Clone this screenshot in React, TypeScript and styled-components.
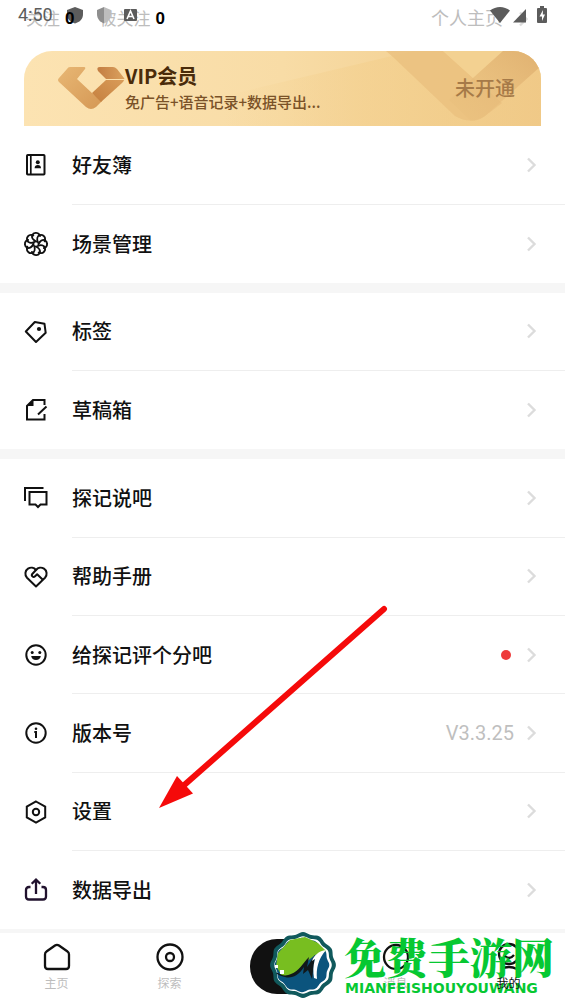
import React from "react";
import styled, { createGlobalStyle } from "styled-components";

const GlobalStyle = createGlobalStyle`
  * { box-sizing: border-box; }
  body {
    margin: 0;
    background: #fff;
    color: #111;
    font-family: Roboto, "Noto Sans CJK SC", sans-serif;
  }
  a { color: inherit; text-decoration: none; }
  button { font: inherit; border: 0; padding: 0; cursor: pointer; }
`;

const Page = styled.div`
  position: relative;
  display: flex;
  flex-direction: column;
  min-height: 100vh;
  overflow: hidden;
`;

const Profile = styled.header`
  display: flex;
  align-items: center;
  height: 51px;
  padding: 0 36px 14px 26px;
  font-size: 18px;
  line-height: 24px;
  color: #bdbdbd;
`;

const Stat = styled.a`
  display: flex;
  align-items: center;
  gap: 5px;
  margin-right: 25px;
  font-size: 17px;
`;

const Count = styled.strong`
  position: relative;
  z-index: 1;
  font-family: "Liberation Sans", sans-serif;
  font-size: 17px;
  color: #000;
`;

const ProfileLink = styled.a`
  display: flex;
  align-items: center;
  gap: 16px;
  margin-left: auto;
`;

const StatusBar = styled.div`
  position: absolute;
  top: 0;
  left: 0;
  right: 0;
  display: flex;
  align-items: center;
  height: 30px;
  padding: 0 18px;
  color: #5c5c5c;
`;

const Clock = styled.time`
  width: 48px;
  font-size: 18px;
  line-height: 30px;
`;

const StatusIcons = styled.div<{ $end?: boolean }>`
  display: flex;
  align-items: center;
  gap: ${(p) => (p.$end ? 3 : 12)}px;
  margin-left: ${(p) => (p.$end ? "auto" : 0)};
`;

const VipCard = styled.a`
  position: relative;
  display: flex;
  align-items: center;
  height: 75px;
  margin: 0 24px;
  padding: 0 26px 2px 34px;
  border-radius: 28px 28px 0 0;
  overflow: hidden;
  font-family: "Noto Sans CJK SC", sans-serif;
  background: linear-gradient(90deg, #fce3b2, #f8dca6 50%, #f0ca88);
`;

const VipPattern = styled.svg`
  position: absolute;
  top: 0;
  right: 0;
`;

const VipLogo = styled.svg`
  position: relative;
  flex: none;
`;

const VipText = styled.div`
  position: relative;
  flex: 1;
  color: #4a2b0a;
`;

const VipTitle = styled.div`
  font-size: 20px;
  line-height: 28px;
  font-weight: 700;
`;

const VipNote = styled.div`
  font-size: 15px;
  line-height: 24px;
  font-weight: 500;
  color: #7a5228;
`;

const VipState = styled.span`
  position: relative;
  font-size: 20px;
  font-weight: 500;
  color: #a67a48;
`;

const Group = styled.ul<{ $rows: number; $gap: number }>`
  display: flex;
  flex-direction: column;
  flex: ${(p) => p.$rows} 0 auto;
  margin: 0;
  padding: 0;
  list-style: none;
  border-bottom: ${(p) => p.$gap}px solid #f6f6f6;
`;

const Item = styled.li`
  display: flex;
  flex: 1 0 auto;
  min-height: 78px;
`;

const RowLink = styled.a`
  display: flex;
  flex: 1;
  gap: 24px;
  padding-left: 24px;
`;

const RowIcon = styled.svg`
  flex: none;
  align-self: center;
  overflow: visible;
`;

const RowBody = styled.div`
  display: flex;
  flex: 1;
  align-items: center;
  gap: 13px;
  padding-right: 28px;
  ${Item}:not(:last-child) & {
    border-bottom: 1px solid #eeeeee;
  }
`;

const Label = styled.span`
  flex: 1;
  padding-top: 2px;
  font-size: 20px;
  line-height: 28px;
  font-weight: 500;
`;

const Value = styled.span`
  font-size: 20px;
  color: #bfbfbf;
`;

const Dot = styled.span`
  width: 10px;
  height: 10px;
  margin-right: 3px;
  border-radius: 50%;
  background: #ee3b3b;
`;

const TabBar = styled.nav`
  display: grid;
  grid-template-columns: repeat(5, 1fr);
  height: 71px;
`;

const Tab = styled.a`
  display: flex;
  flex-direction: column;
  align-items: center;
  padding-top: 8px;
  gap: 2px;
  color: #111;
`;

const TabLabel = styled.span<{ $active?: boolean }>`
  position: relative;
  z-index: ${(p) => (p.$active ? 1 : 0)};
  font-size: 12px;
  line-height: 18px;
  color: ${(p) => (p.$active ? "#111" : "#bdbdbd")};
`;

const AddButton = styled.button`
  justify-self: center;
  width: 66px;
  height: 55px;
  margin-top: 6px;
  border-radius: 27px;
  background: #111;
  color: #fff;
`;

const Pointer = styled.svg`
  position: absolute;
  top: 600px;
  left: 150px;
  pointer-events: none;
`;

const Watermark = styled.div`
  position: absolute;
  right: 11px;
  bottom: 6px;
  display: flex;
  align-items: center;
  gap: 8px;
  color: #06c832;
  pointer-events: none;
`;

const SiteName = styled.div`
  font-family: "Noto Serif CJK SC", "Noto Sans CJK SC", serif;
  font-size: 42px;
  line-height: 46px;
  font-weight: 900;
`;

const SiteUrl = styled.div`
  padding-left: 1px;
  font-family: "DejaVu Sans", sans-serif;
  font-size: 14px;
  line-height: 18px;
  font-weight: 700;
`;

const Chevron = () => (
  <svg width="10" height="16" viewBox="0 0 10 16" fill="none" stroke="#dcdcdc" strokeWidth="2.4" aria-hidden="true">
    <path d="M1 1.500L7.500 8 1 14.500" />
  </svg>
);

const petals = [0, 45, 90, 135, 180, 225, 270, 315];

const icons: Record<string, React.ReactNode> = {
  book: (
    <>
      <rect x="3" y="2" width="17.500" height="19.500" rx="0.800" />
      <path d="M6.800 2v19.500" strokeWidth="1.700" />
      <circle cx="13.800" cy="9.300" r="2" fill="currentColor" stroke="none" />
      <path d="M10.600 15.200c0-2 1.300-3.100 3.200-3.100s3.200 1.100 3.200 3.100z" fill="currentColor" stroke="none" />
    </>
  ),
  flower: (
    <>
      {petals.map((a) => (
        <path
          key={a}
          transform={`rotate(${a} 12 12)`}
          d="M12 9.500C9 8 7.300 5.300 8.300 3.200C9.500 .4 13.500 .2 15.200 2.300C16 3.300 16.100 4 15.900 4.800"
          strokeWidth="1.900"
        />
      ))}
      <circle cx="12" cy="12" r="2.500" strokeWidth="1.300" />
    </>
  ),
  tag: (
    <>
      <path d="M1.800 11.500L10.800 2l9.700 1.800 1.200 9-9.700 9.200z" strokeLinejoin="round" />
      <circle cx="15" cy="9" r="2.100" fill="currentColor" stroke="none" />
    </>
  ),
  draft: (
    <>
      <path d="M20.500 7V2H9L3 8v13.500h17.500V16" />
      <path d="M9.500 2v6H3z" fill="currentColor" stroke="none" />
      <path d="M14 16.500l8.500-8" />
    </>
  ),
  chat: (
    <>
      <path d="M1 15V2h18.500" />
      <path d="M5.500 6h17v12.500h-6L14 21l-2.500-2.500h-6z" />
    </>
  ),
  help: (
    <>
      <path d="M12 21.500L3 12.800C.4 10 1.100 5.500 4 3.700 6.700 2 10 2.600 12 5c2-2.400 5.300-3 8-1.300 2.900 1.800 3.600 6.300 1 9.100z" strokeLinejoin="round" />
      <path d="M12 5L8.500 8.700c-1.800 2 .7 4.300 2.600 2.500l2-1.900 6 5.700" strokeLinejoin="round" />
    </>
  ),
  smile: (
    <>
      <circle cx="12" cy="12" r="9.700" />
      <circle cx="8.200" cy="9.500" r="1.500" fill="currentColor" stroke="none" />
      <circle cx="15.800" cy="9.500" r="1.500" fill="currentColor" stroke="none" />
      <path d="M7.200 13h9.600c-.4 2.700-2.200 4-4.800 4s-4.400-1.300-4.800-4z" fill="currentColor" stroke="none" />
    </>
  ),
  info: (
    <>
      <circle cx="12" cy="12" r="9.700" />
      <circle cx="12" cy="7.700" r="1.300" fill="currentColor" stroke="none" />
      <path d="M10.300 10.900H12V17" />
    </>
  ),
  settings: (
    <>
      <path d="M12 1.500l9.200 5.200v10.600L12 22.500l-9.200-5.200V6.700z" />
      <circle cx="12" cy="12" r="3.200" />
    </>
  ),
  share: (
    <g stroke="#21122e" strokeWidth="2.300">
      <path d="M6.500 9H5c-2 0-3 1-3 3v6.500c0 2 1 3 3 3h14c2 0 3-1 3-3V12c0-2-1-3-3-3h-1.500" />
      <path d="M12 16V2M7.700 5.800L12 1.600l4.300 4.200" />
    </g>
  ),
};

type Row = { icon: string; label: string; value?: string; dot?: boolean };

const groups: Row[][] = [
  [
    { icon: "book", label: "好友簿" },
    { icon: "flower", label: "场景管理" },
  ],
  [
    { icon: "tag", label: "标签" },
    { icon: "draft", label: "草稿箱" },
  ],
  [
    { icon: "chat", label: "探记说吧" },
    { icon: "help", label: "帮助手册" },
    { icon: "smile", label: "给探记评个分吧", dot: true },
    { icon: "info", label: "版本号", value: "V3.3.25" },
    { icon: "settings", label: "设置" },
    { icon: "share", label: "数据导出" },
  ],
];

const TabIcon = ({ children }: { children: React.ReactNode }) => (
  <svg width="32" height="32" viewBox="0 0 32 32" fill="none" stroke="currentColor" strokeWidth="2.300" aria-hidden="true">
    {children}
  </svg>
);

/* Scalloped outline of the site emblem */
const scallop = (cx: number, cy: number, r: number, depth: number) => {
  const pts: string[] = [];
  for (let i = 0; i < 120; i++) {
    const t = (i / 120) * Math.PI * 2;
    const d = r + depth * Math.cos(12 * t);
    pts.push(`${(cx + d * Math.cos(t)).toFixed(1)},${(cy + d * Math.sin(t)).toFixed(1)}`);
  }
  return pts.join(" ");
};

export default function App() {
  return (
    <Page>
      <GlobalStyle />
      <Profile>
        <Stat href="#following">关注 <Count>0</Count></Stat>
        <Stat href="#followers">被关注 <Count>0</Count></Stat>
        <ProfileLink href="#profile">
          个人主页
          <Chevron />
        </ProfileLink>
      </Profile>

      <StatusBar>
        <Clock>4:50</Clock>
        <StatusIcons>
          <svg width="18" height="18" viewBox="0 0 18 18" aria-hidden="true">
            <path d="M9 1l8 3v4c0 5-3 8-8 9.500C4 16 1 13 1 8V4z" fill="#5c5c5c" />
          </svg>
          <svg width="16" height="18" viewBox="0 0 16 18" aria-hidden="true">
            <path d="M8 1l7 3v4c0 5-3 8-7 9.500z" fill="#bdbdbd" />
            <path d="M8 1L1 4v4c0 5 3 8 7 9.500z" fill="#8e8e8e" />
          </svg>
          <svg width="13" height="18" viewBox="0 0 13 18" aria-hidden="true">
            <rect x="0" y="3" width="13" height="12" rx="1" fill="#5c5c5c" />
            <path d="M3 13l3.500-8L10 13M4.500 10.500h4" fill="none" stroke="#fff" strokeWidth="1.600" />
          </svg>
        </StatusIcons>
        <StatusIcons $end>
          <svg width="20" height="18" viewBox="0 0 20 18" aria-hidden="true">
            <path d="M0 4.500C6-.2 14-.2 20 4.500L10 17z" fill="currentColor" />
          </svg>
          <svg width="21" height="18" viewBox="0 0 21 18" aria-hidden="true">
            <path d="M0 16.500L13 3v13.500z" fill="currentColor" />
          </svg>
          <svg width="10" height="18" viewBox="0 0 10 18" aria-hidden="true">
            <path d="M3 0h4v2h2q1 0 1 1v13q0 1-1 1H1q-1 0-1-1V3q0-1 1-1h2z" fill="currentColor" />
            <path d="M6 4L2.500 10.500H5V15l3-6.500H5.800z" fill="#fff" />
          </svg>
        </StatusIcons>
      </StatusBar>

      <VipCard href="#vip">
        <VipPattern width="317" height="75" viewBox="200 0 317 75" aria-hidden="true">
          <defs>
            <linearGradient id="sweep" x1="0" x2="1">
              <stop offset="0" stopColor="#f3cf8c" stopOpacity="0" />
              <stop offset="0.500" stopColor="#f3cf8c" stopOpacity="0.600" />
              <stop offset="1" stopColor="#f0c987" stopOpacity="0.700" />
            </linearGradient>
            <linearGradient id="arm" x1="1" y1="0" x2="0" y2="1">
              <stop offset="0" stopColor="#e0b171" />
              <stop offset="1" stopColor="#e9c07d" stopOpacity="0.300" />
            </linearGradient>
          </defs>
          <path d="M200 45L389 0H517V75H200z" fill="url(#sweep)" />
          <path d="M362 0H419L449 27L478 52L461 65Q447 74 431 65L369 6z" fill="#e9bf7d" opacity="0.750" />
          <path d="M419 0H479L449 27z" fill="#f3d191" />
          <path d="M479 0H517V15L461 65Q455 70 447 70L425 49L449 27z" fill="url(#arm)" />
        </VipPattern>
        <VipLogo width="67" height="44" viewBox="0 0 67 44" aria-hidden="true">
          <defs>
            <linearGradient id="gold" x1="0" x2="1" y2="1">
              <stop offset="0" stopColor="#e8b774" />
              <stop offset="1" stopColor="#d59855" />
            </linearGradient>
            <linearGradient id="bronze" x1="0" x2="1">
              <stop offset="0" stopColor="#c37d42" />
              <stop offset="1" stopColor="#dba25f" />
            </linearGradient>
            <linearGradient id="shade" x1="0" y1="1" x2="1" y2="0">
              <stop offset="0" stopColor="#c5803f" />
              <stop offset="1" stopColor="#d99b58" />
            </linearGradient>
          </defs>
          <path d="M12 1H26Q28 1 27 3L19 13L34 27L44 35L38 41Q33 45 28 41L1 16Q-1 14 1 12L9 3Q10 1 12 1z" fill="url(#gold)" />
          <path d="M42 1h13q2 0 4 2l7 9q1 1 0 1H48L40 5q-2-4 2-4z" fill="url(#bronze)" />
          <path d="M48 14H66Q66 15 64 17L43 36L34 27z" fill="url(#shade)" />
        </VipLogo>
        <VipText>
          <VipTitle>VIP会员</VipTitle>
          <VipNote>免广告+语音记录+数据导出...</VipNote>
        </VipText>
        <VipState>未开通</VipState>
      </VipCard>

      {groups.map((rows, i) => (
        <Group key={i} $rows={rows.length} $gap={i === groups.length - 1 ? 4 : 10}>
          {rows.map((row) => (
            <Item key={row.icon}>
              <RowLink href={`#${row.icon}`}>
                <RowIcon
                  width="24"
                  height="24"
                  viewBox="0 0 24 24"
                  fill="none"
                  stroke="currentColor"
                  strokeWidth="2"
                  aria-hidden="true"
                >
                  {icons[row.icon]}
                </RowIcon>
                <RowBody>
                  <Label>{row.label}</Label>
                  {row.value && <Value>{row.value}</Value>}
                  {row.dot && <Dot />}
                  <Chevron />
                </RowBody>
              </RowLink>
            </Item>
          ))}
        </Group>
      ))}

      <TabBar>
        <Tab href="#home">
          <TabIcon>
            <path d="M14 4.500q2-1.400 4 0l8.500 6q1.500 1 1.500 3V25q0 3-3 3H7q-3 0-3-3V13.500q0-2 1.500-3z" />
          </TabIcon>
          <TabLabel>主页</TabLabel>
        </Tab>
        <Tab href="#explore">
          <TabIcon>
            <circle cx="16" cy="16" r="12.500" />
            <circle cx="16" cy="16" r="4" />
          </TabIcon>
          <TabLabel>探索</TabLabel>
        </Tab>
        <AddButton aria-label="新建">
          <svg width="20" height="20" viewBox="0 0 20 20" stroke="currentColor" strokeWidth="3" aria-hidden="true">
            <path d="M10 1v18M1 10h18" />
          </svg>
        </AddButton>
        <Tab href="#messages">
          <TabIcon>
            <circle cx="16" cy="16" r="12" />
          </TabIcon>
          <TabLabel>消息</TabLabel>
        </Tab>
        <Tab href="#me">
          <TabIcon>
            <circle cx="16" cy="13" r="10" />
            <path d="M11 14q5 6 10 0M8 28q8-4 16 0" />
          </TabIcon>
          <TabLabel $active>我的</TabLabel>
        </Tab>
      </TabBar>

      <Pointer width="250" height="220" viewBox="150 600 250 220" aria-hidden="true">
        <path d="M384 609L182 787" stroke="#f50a0a" strokeWidth="6" strokeLinecap="round" />
        <path d="M159 808L177 776L193 793.500z" fill="#f50a0a" />
      </Pointer>

      <Watermark>
        <svg width="66" height="66" viewBox="0 0 66 66" aria-hidden="true">
          <polygon points={scallop(33, 33, 32, 0.900)} fill="#10595c" />
          <polygon points={scallop(33, 33, 28, 0.800)} fill="#fff" />
          <polygon points={scallop(32, 33, 26.500, 0.800)} fill="#0b547d" />
          <path d="M6 34L8 21 20 8 35 5l13 6 8 8-11 4-10 8-12 13H12z" fill="#78be20" />
          <path d="M8 41c4 3 9 3 13 1 8-3 12-11 18-17l-2 10 8-12-3 24-4-9-5 4 1-7c-5 8-12 12-19 10-4-1-7-2-9-4z" fill="#11181a" />
          <path d="M56 18c-7 1-12 5-14 11l3-2c-2 7-2 13-1 19l3 1c-1-10 1-20 9-29zM5 33h3v3H5zM10 38h4v4h-4z" fill="#fff" />
        </svg>
        <div>
          <SiteName>免费手游网</SiteName>
          <SiteUrl>MIANFEISHOUYOUWANG</SiteUrl>
        </div>
      </Watermark>
    </Page>
  );
}
